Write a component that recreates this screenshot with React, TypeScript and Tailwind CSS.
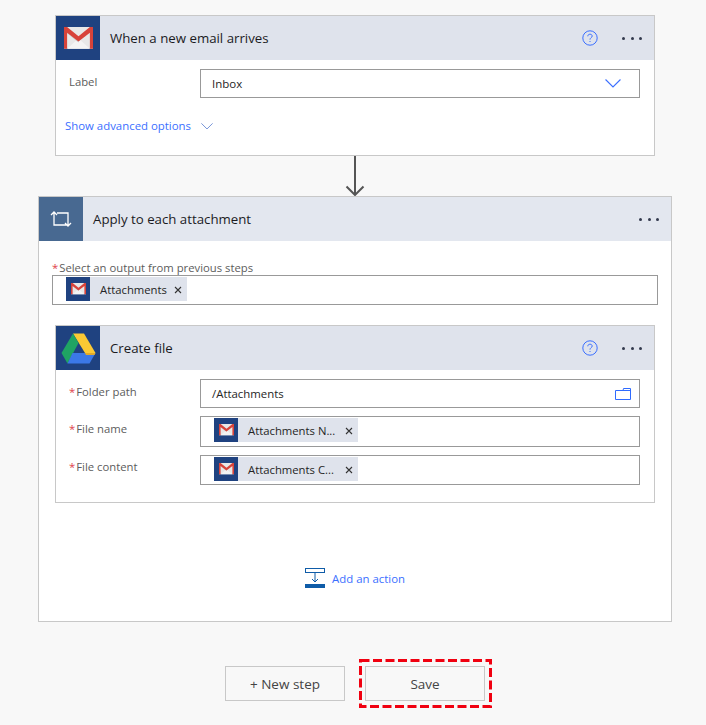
import React from "react";

function Gmail({ size = 30 }: { size?: number }) {
  return (
    <svg width={size} height={size * 0.75} viewBox="1 1 28 21">
      <rect x="1" y="1" width="28" height="21" fill="#e8e8e8" />
      <path d="M4 22 L15 12 L26 22 Z" fill="#f4f4f4" />
      <path d="M4 4 L15 13 L15 16 L4 7 Z" fill="#c9c9c9" />
      <path d="M1 1 L4 1 L15 10 L26 1 L29 1 L29 22 L26 22 L26 6.5 L15 15 L4 6.5 L4 22 L1 22 Z" fill="#d8433a" />
    </svg>
  );
}

function Drive() {
  return (
    <svg width="35" height="31" viewBox="0 0 35 31">
      <path d="M12 0.5 L23 0.5 L34.5 20 L24 20 Z" fill="#fbc934" />
      <path d="M12 0.5 L0.5 20 L6.5 30.5 L17.5 10 Z" fill="#1fa463" />
      <path d="M11.5 20 L34.5 20 L28.5 30.5 L6.5 30.5 Z" fill="#3b78e7" />
      <path d="M24 20 L34.5 20 L33.5 22 L25 22 Z" fill="#e2a92a" />
    </svg>
  );
}

function Help() {
  return (
    <svg width="16" height="16" viewBox="0 0 16 16" fill="none" stroke="#3b6fff">
      <circle cx="8" cy="8" r="7.2" />
      <path d="M5.8 6.3 C5.8 4.9 6.8 4.2 8 4.2 C9.3 4.2 10.2 5 10.2 6.1 C10.2 7.6 8 7.7 8 9.6" />
      <path d="M8 11 V12" />
    </svg>
  );
}

function Dots() {
  return (
    <span className="flex gap-[5.5px]">
      <i className="block w-[3px] h-[3px] rounded-full bg-[#333a4d]" />
      <i className="block w-[3px] h-[3px] rounded-full bg-[#333a4d]" />
      <i className="block w-[3px] h-[3px] rounded-full bg-[#333a4d]" />
    </span>
  );
}

function Chevron({ w = 16, color = "#3b6fff" }: { w?: number; color?: string }) {
  return (
    <svg width={w} height={w * 0.56} viewBox="0 0 16 9" fill="none" stroke={color} strokeWidth="1.1">
      <path d="M0.5 0.5 L8 8 L15.5 0.5" />
    </svg>
  );
}

function Chip({ text, w }: { text: string; w: number }) {
  return (
    <span className="flex h-6 bg-[#dfe3ec] items-center text-[11.3px] text-[#252525]" style={{ width: w }}>
      <span className="w-6 h-6 bg-[#1f4280] flex items-center justify-center shrink-0">
        <Gmail size={15} />
      </span>
      <span className="ml-[10px] pt-[2px] whitespace-nowrap">{text}</span>
      <svg className="ml-auto mr-[5.5px] mt-[1px]" width="8" height="8" viewBox="0 0 8 8" stroke="#333" strokeWidth="1.1">
        <path d="M1 1 L7 7 M7 1 L1 7" />
      </svg>
    </span>
  );
}

function Header({ title, icon, iconBg, bg, help }: { title: string; icon: React.ReactNode; iconBg: string; bg: string; help?: boolean }) {
  return (
    <div className={`flex h-11 items-center ${bg}`}>
      <div className={`w-11 h-11 flex items-center justify-center shrink-0 ${iconBg}`}>{icon}</div>
      <div className="ml-[10px] pt-[2px] text-[13.25px] text-[#1b1b1f]">{title}</div>
      {help && <div className="ml-auto mr-[24px] flex"><Help /></div>}
      <div className={`${help ? "" : "ml-auto"} mr-[12px] flex`}><Dots /></div>
    </div>
  );
}

function Label({ text, req = true }: { text: string; req?: boolean }) {
  return (
    <div className="w-[144px] shrink-0 pl-[13px] text-[11.3px] text-[#5c5c5c] leading-[16px]">
      {req && <span className="text-[#e0424a] mr-[1px]">*</span>}
      {text}
    </div>
  );
}

export default function App() {
  return (
    <div className="w-[706px] h-[725px] overflow-hidden bg-[#f8f8f8] flex flex-col items-center pt-[15px] pl-[4px]" style={{ fontFamily: '"Open Sans", "Noto Sans", sans-serif' }}>
      {/* Trigger card */}
      <div className="w-[600px] h-[141px] border border-[#c8c8c8] bg-white shrink-0">
        <Header title="When a new email arrives" icon={<Gmail size={29} />} iconBg="bg-[#1f4280]" bg="bg-[#dfe3ec]" help />
        <div className="flex items-start mt-[9px]">
          <div className="pt-[5px]"><Label text="Label" req={false} /></div>
          <div className="w-[440px] h-[29px] border border-[#999] flex items-center pl-[11px] pr-[18px] text-[11.5px] text-[#252525]">
            Inbox
            <span className="ml-auto flex"><Chevron /></span>
          </div>
        </div>
        <div className="flex items-center ml-[9px] mt-[20px] text-[11.4px] text-[#3b6fff] leading-[16px]">
          Show advanced options
          <span className="ml-[10px] flex"><Chevron w={12} color="#5b7fd0" /></span>
        </div>
      </div>

      {/* Connector */}
      <div className="h-10 flex justify-center shrink-0">
        <svg width="20" height="40" viewBox="0 0 20 40" fill="none" stroke="#555" strokeWidth="2">
          <path d="M10 0 V39 M1.5 30.5 L10 39 L18.5 30.5" />
        </svg>
      </div>

      {/* Loop card */}
      <div className="w-[634px] h-[426px] border border-[#c8c8c8] bg-white shrink-0">
        <Header
          title="Apply to each attachment"
          iconBg="bg-[#486991]"
          bg="bg-[#e3e7ef]"
          icon={
            <svg width="22" height="16" viewBox="0 0 22 16" fill="none" stroke="#fff" strokeWidth="1.3">
              <path d="M1 4 L4 1 L7 4 M4 1 V14 H17 M15 12 L18 15 L21 12 M18 15 V2 H7" />
            </svg>
          }
        />
        <div className="ml-[13px] mt-[19px] text-[11.3px] text-[#5c5c5c] leading-[16px]">
          <span className="text-[#e0424a] mr-[1px]">*</span>Select an output from previous steps
        </div>
        <div className="ml-[13px] w-[606px] h-[30px] border border-[#999] flex items-start pt-[1px] pl-[13px] mt-[-1px]">
          <Chip text="Attachments" w={121} />
        </div>

        {/* Nested action */}
        <div className="ml-4 mt-5 w-[600px] h-[178px] border border-[#c8c8c8]">
          <Header title="Create file" icon={<Drive />} iconBg="bg-[#1f4280]" bg="bg-[#dfe3ec]" help />
          <div className="flex flex-col mt-[9px]">
            <div className="flex items-start h-[30px]">
              <div className="pt-[5px]"><Label text="Folder path" /></div>
              <div className="w-[440px] h-[29px] border border-[#999] flex items-center pl-[11px] pr-[8px] text-[11.4px] text-[#252525]">
                /Attachments
                <svg className="ml-auto" width="16" height="12" viewBox="0 0 16 12" fill="none" stroke="#2f6bff">
                  <path d="M0.5 11.5 V2.5 H8 L8.5 0.5 H15.5 V11.5 Z M8 2.5 H15.5" />
                </svg>
              </div>
            </div>
            <div className="flex items-start mt-[7px]">
              <div className="pt-[5px]"><Label text="File name" /></div>
              <div className="w-[440px] h-[31px] border border-[#999] flex items-start pt-[1px] pl-[13px]">
                <Chip text="Attachments N..." w={144} />
              </div>
            </div>
            <div className="flex items-start mt-[8px]">
              <div className="pt-[4px]"><Label text="File content" /></div>
              <div className="w-[440px] h-[30px] border border-[#999] flex items-start pt-[1px] pl-[13px]">
                <Chip text="Attachments C..." w={144} />
              </div>
            </div>
          </div>
        </div>

        {/* Add an action */}
        <div className="flex justify-center items-center mt-[65px] text-[11.4px] text-[#3b6fff]">
          <svg width="20" height="20" viewBox="0 0 20 20" fill="none" className="mr-[7px] mb-[2px]">
            <rect x="0.5" y="0.5" width="19" height="4" stroke="#0f5ca8" />
            <path d="M10 5 V14 M7 11 L10 14 L13 11" stroke="#0f5ca8" />
            <rect x="0" y="16" width="20" height="4" fill="#0f5ca8" />
          </svg>
          Add an action
        </div>
      </div>

      {/* Buttons */}
      <div className="flex gap-5 mt-[44px] shrink-0 text-[13.5px] text-[#444]">
        <button className="w-[120px] h-[35px] border border-[#c8c8c8] flex items-center justify-center pt-[2px]">+ New step</button>
        <div className="relative">
          <button className="w-[120px] h-[35px] border border-[#c8c8c8] flex items-center justify-center pt-[2px]">Save</button>
          <svg className="absolute left-[-6px] top-[-7px]" width="133" height="49" viewBox="0 0 133 49" fill="none">
            <rect x="1.5" y="1.5" width="130" height="46" stroke="#f00010" strokeWidth="3" strokeDasharray="9 3.5" />
          </svg>
        </div>
      </div>
    </div>
  );
}
